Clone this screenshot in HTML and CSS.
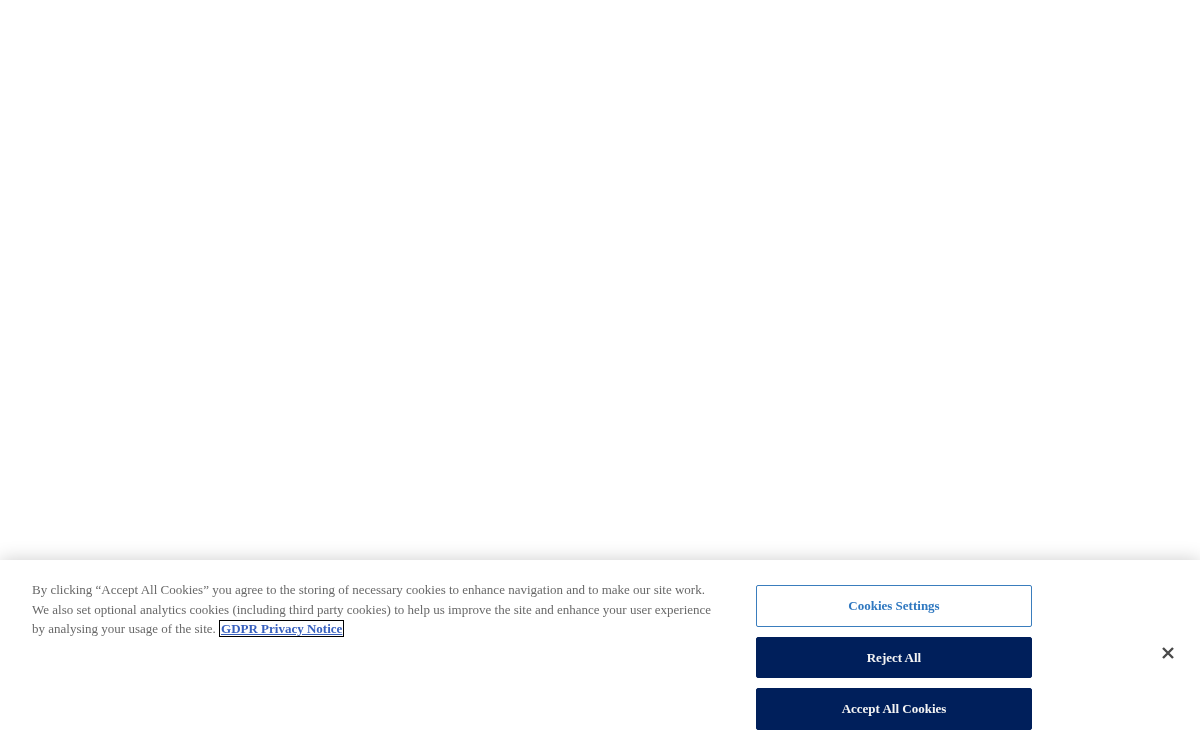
FILE: index.html
```html
<!DOCTYPE html>
<html lang="en">
<head>
<meta charset="utf-8">
<title>Cookies</title>
<link rel="stylesheet" href="styles.css">
</head>
<body>
<main class="page"></main>
<div class="banner" role="dialog" aria-label="Cookie banner">
  <div class="banner-row">
    <p class="policy">By clicking “Accept All Cookies” you agree to the storing of necessary cookies to enhance navigation and to make our site work. We also set optional analytics cookies (including third party cookies) to help us improve the site and enhance your user experience by analysing your usage of the site. <a class="policy-link" href="#">GDPR Privacy Notice</a></p>
    <div class="actions">
      <button class="btn btn-outline" type="button">Cookies Settings</button>
      <button class="btn btn-solid btn-short" type="button">Reject All</button>
      <button class="btn btn-solid" type="button">Accept All Cookies</button>
    </div>
    <button class="close" type="button" aria-label="Close">
      <svg width="12" height="12" viewBox="0 0 12 12"><path d="M1 1L11 11M11 1L1 11" stroke="#4a4a4a" stroke-width="2.4" stroke-linecap="butt"/></svg>
    </button>
  </div>
</div>
</body>
</html>
```

FILE: styles.css
```css
html, body {
  margin: 0;
  padding: 0;
  background: #ffffff;
  height: 100%;
  overflow: hidden;
}
.page {
  height: 100%;
}
.banner {
  position: fixed;
  left: 0;
  right: 0;
  bottom: 0;
  height: 190px;
  background: #ffffff;
  box-shadow: 0 0 18px rgba(0, 0, 0, 0.2);
  font-family: "Liberation Serif", "Times New Roman", serif;
}
.banner-row {
  display: flex;
  align-items: flex-start;
}
.policy {
  flex: 0 0 690px;
  margin: 20px 0 0 32px;
  font-size: 13px;
  line-height: 19.5px;
  color: #696969;
  letter-spacing: 0;
}
.policy-link {
  color: #3860be;
  font-weight: bold;
  text-decoration: underline;
  outline: 1px solid #000000;
  outline-offset: 0;
  margin-left: 1px;
  padding: 0 1px;
}
.actions {
  margin: 25px 0 0 34px;
  width: 276px;
  display: flex;
  flex-direction: column;
  gap: 10px;
}
.btn {
  font-family: "Liberation Serif", "Times New Roman", serif;
  font-size: 13px;
  font-weight: bold;
  height: 42px;
  border-radius: 2px;
  cursor: pointer;
}
.btn-short {
  height: 41px;
}
.btn-outline {
  background: #ffffff;
  color: #2f78c0;
  border: 1px solid #3a7dbd;
}
.btn-solid {
  background: #001f5b;
  color: #f4f4f4;
  border: 1px solid #001f5b;
}
.close {
  margin: 81px 0 0 124px;
  width: 24px;
  height: 24px;
  padding: 0;
  border: 0;
  background: transparent;
  display: flex;
  align-items: center;
  justify-content: center;
  cursor: pointer;
}
```
